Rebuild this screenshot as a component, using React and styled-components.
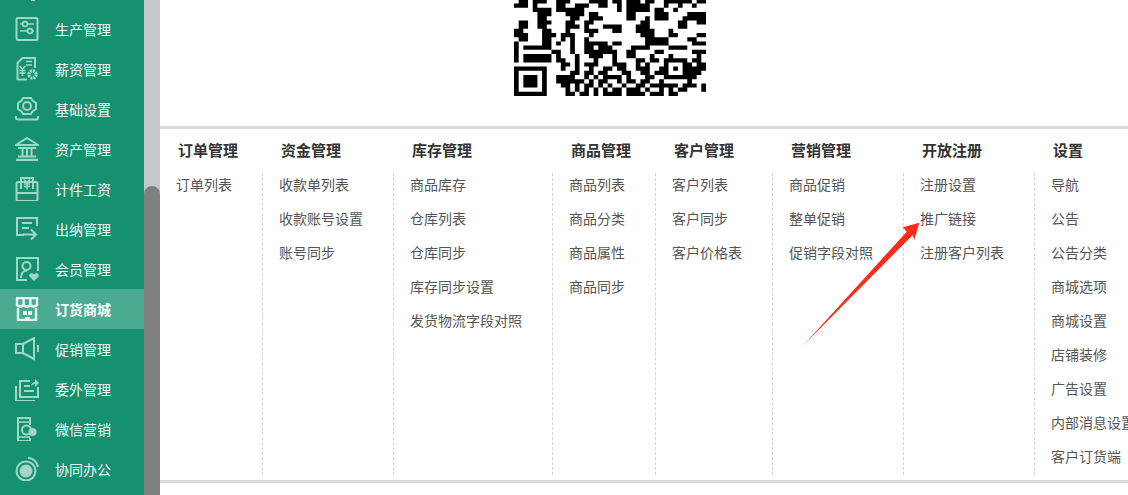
import React from "react";
import styled, { createGlobalStyle } from "styled-components";

const Global = createGlobalStyle`
  html, body { margin: 0; padding: 0; height: 495px; overflow: hidden; background: #fff; }
  body { font-family: "Noto Sans CJK SC", "Liberation Sans", sans-serif; }
  #root { height: 495px; overflow: hidden; }
`;

const Page = styled.div`
  display: flex;
  width: 1128px;
  height: 495px;
  overflow: hidden;
`;
const Sidebar = styled.nav`
  flex: 0 0 144px;
  background: #159170;
  overflow: hidden;
`;
const NavRow = styled.div`
  display: flex;
  align-items: center;
  gap: 16px;
  height: 40px;
  padding-left: 15px;
  font-size: 14px;
  line-height: 20px;
  color: ${(p) => (p.$active ? "#ffffff" : "#eef8f5")};
  font-weight: ${(p) => (p.$active ? 700 : 400)};
  background: ${(p) => (p.$active ? "#4aab90" : "transparent")};
  &:first-child { margin-top: -31px; }
`;
const NavIcon = styled.svg`
  flex: 0 0 24px;
  width: 24px;
  height: 24px;
  fill: none;
  stroke: ${(p) => (p.$active ? "#e6f4f0" : "#a3d6c7")};
  color: ${(p) => (p.$active ? "#e6f4f0" : "#a3d6c7")};
  stroke-width: ${(p) => (p.$active ? 2.4 : 2)};
`;
const Track = styled.div`
  flex: 0 0 16px;
  display: flex;
  flex-direction: column;
  background: #c6c8cd;
`;
const Thumb = styled.div`
  margin-top: 186px;
  flex: 1;
  background: #808080;
  border-radius: 8px 8px 0 0;
`;
const Main = styled.main`
  position: relative;
  flex: 1;
  min-width: 0;
  overflow: hidden;
  background: #fff;
`;
const TopArea = styled.section`
  height: 126px;
  padding-left: 354px;
  display: flex;
  flex-direction: column;
  align-items: flex-start;
`;
const Qr = styled.svg`
  display: block;
  flex: 0 0 96px;
  width: 192px;
  height: 96px;
`;
const Caption = styled.div`
  margin-top: 28px;
  width: 192px;
  height: 2px;
  overflow: hidden;
  text-align: center;
  white-space: nowrap;
  font-size: 13px;
  line-height: 15px;
  color: #333;
`;
const MenuPanel = styled.section`
  display: flex;
  height: 357px;
  box-sizing: border-box;
  border-top: 3px solid #d9d9d9;
  border-bottom: 3px solid #d9d9d9;
  padding-bottom: 5px;
  width: 1100px;
`;
const Column = styled.div`
  flex: 0 0 ${(p) => p.$w}px;
  display: flex;
  flex-direction: column;
  min-width: 0;
`;
const ColTitle = styled.h3`
  flex: 0 0 44px;
  margin: 0;
  padding-left: ${(p) => (p.$first ? 18 : 19)}px;
  font-size: 15px;
  line-height: 42px;
  font-weight: 700;
  color: #333;
  white-space: nowrap;
`;
const ColList = styled.ul`
  flex: 1;
  min-height: 0;
  margin: 0;
  padding: 0 0 0 16px;
  list-style: none;
  border-left: ${(p) => (p.$first ? "0" : "1px dashed #d4d4d4")};
`;
const ColItem = styled.li`
  height: 24px;
  margin-bottom: 10px;
  font-size: 14px;
  line-height: 22px;
  color: #555;
  white-space: nowrap;
`;
const Arrow = styled.svg`
  position: absolute;
  left: 640px;
  top: 220px;
  width: 122px;
  height: 130px;
  fill: #ff2a1a;
`;

const Yen = () => <path d="M0 0l3 3 3-3M3 3v7M0 4.5h6M0 7h6" strokeWidth="1.5" />;

const icons = {
  top: <path d="M16 23h4" />,
  prod: (
    <>
      <rect x="1.5" y="1" width="21" height="22" rx="1.5" />
      <path d="M5 7h14M5 14h14" strokeWidth="1.7" />
      <circle cx="10" cy="7" r="2.4" fill="#159170" strokeWidth="1.7" />
      <circle cx="15" cy="14" r="2.4" fill="#159170" strokeWidth="1.7" />
    </>
  ),
  pay: (
    <>
      <path d="M12 22.500H2.500V6l5-5h12.500v10" />
      <path d="M11 4.500h6M11 8h6" strokeWidth="1.500" />
      <g transform="translate(4.500 9)"><Yen /></g>
      <circle cx="17.500" cy="17.500" r="3.600" strokeWidth="3.200" strokeDasharray="2 .8" />
    </>
  ),
  base: (
    <>
      <path d="M8 1h8l1.500 2.500L21 6v6l-3.500 2.500L16 17H8l-1.500-2.500L3 12V6l3.500-2.500z" />
      <circle cx="12" cy="9" r="4" />
      <path d="M1 19v2q0 1.500 2 1.500h18q2 0 2-1.500v-2" />
    </>
  ),
  asset: (
    <>
      <path d="M1 8l11-7 11 7z" />
      <path d="M3 11h18M3 19.500h18" />
      <path d="M7.500 11v8M12 11v8M16.500 11v8" />
      <path d="M1 23h22" strokeWidth="2.500" />
    </>
  ),
  piece: (
    <>
      <rect x="1.500" y="5" width="21" height="19" rx="2" />
      <path d="M1.500 16h21" />
      <path d="M6 12V1h12v11" />
      <g transform="translate(9 2.500)"><Yen /></g>
    </>
  ),
  cash: (
    <>
      <path d="M22 9V1H2v17h7" />
      <path d="M7 6h10M7 11h7" />
      <path d="M8 17.500h13M16 12.500l5 5-5 5" />
    </>
  ),
  member: (
    <>
      <path d="M23 14V1H2v22h10" />
      <circle cx="11.500" cy="9" r="4" />
      <path d="M6 21q0-7 6-7.500" />
      <path d="M19 24l-4.500-4.500c-1.500-2.500 2.500-4.500 4.500-2 2-2.500 6-.5 4.500 2z" fill="currentColor" stroke="none" />
    </>
  ),
  store: (
    <>
      <path d="M2 1h20v7q-3.300 3-6.600 0-3.400 3-6.800 0-3.300 3-6.600 0z" />
      <path d="M8.600 1v7M15.400 1v7" />
      <path d="M3 11v12h18V11" />
      <path d="M9 15h2v2H9zM14 15h2v2h-2zM11 23v-2h3v2" strokeWidth="1.800" />
    </>
  ),
  promo: (
    <>
      <path d="M1 7h7l11-6v21L8 16H1z" />
      <path d="M8 7v9" />
      <path d="M23 8v7" />
    </>
  ),
  out: (
    <>
      <path d="M1 9v15h19" />
      <path d="M15 4H5v16h18V10" />
      <path d="M9 9h6M9 14h10" />
      <path d="M16 9q1-4 4-4V2l4 4-4 4V7q-2 0-4 2z" fill="currentColor" stroke="none" />
    </>
  ),
  wx: (
    <>
      <path d="M15 8V1H3v23h12v-3" />
      <path d="M3 5h12M3 20h12" strokeWidth="1.500" />
      <circle cx="11.500" cy="13" r="4.500" />
      <circle cx="17.500" cy="15" r="4" fill="currentColor" stroke="none" />
    </>
  ),
  coop: (
    <>
      <circle cx="11" cy="14" r="9.500" />
      <circle cx="11" cy="14" r="6.500" fill="currentColor" stroke="none" />
      <path d="M13 .8C18 1 22 5 23 10" />
    </>
  ),
};

const navItems = [
  ["top", ""],
  ["prod", "生产管理"],
  ["pay", "薪资管理"],
  ["base", "基础设置"],
  ["asset", "资产管理"],
  ["piece", "计件工资"],
  ["cash", "出纳管理"],
  ["member", "会员管理"],
  ["store", "订货商城", true],
  ["promo", "促销管理"],
  ["out", "委外管理"],
  ["wx", "微信营销"],
  ["coop", "协同办公"],
];

const columns = [
  { w: 102, title: "订单管理", items: ["订单列表"] },
  { w: 131, title: "资金管理", items: ["收款单列表", "收款账号设置", "账号同步"] },
  { w: 159, title: "库存管理", items: ["商品库存", "仓库列表", "仓库同步", "库存同步设置", "发货物流字段对照"] },
  { w: 103, title: "商品管理", items: ["商品列表", "商品分类", "商品属性", "商品同步"] },
  { w: 117, title: "客户管理", items: ["客户列表", "客户同步", "客户价格表"] },
  { w: 131, title: "营销管理", items: ["商品促销", "整单促销", "促销字段对照"] },
  { w: 131, title: "开放注册", items: ["注册设置", "推广链接", "注册客户列表"] },
  { w: 130, title: "设置", items: ["导航", "公告", "公告分类", "商城选项", "商城设置", "店铺装修", "广告设置", "内部消息设置", "客户订货端"] },
];

const qrRows = [
  "011011100111000011110" + "11011101100111111011",
  "111010000110011100110" + "01011111000100100100",
  "000011110111111000000" + "01011111011001000000",
  "000001110001111011000" + "00011000011100001111",
  "000001100000110011100" + "00011001011100011111",
  "011001110001100110000" + "00000011000000110011",
  "011001100001110100011" + "11000111000000110000",
  "110000110001000111000" + "11000111100010000000",
  "111000111011100010000" + "00000011100011000011",
  "011000110010100100000" + "00000001111100001100",
  "100000110100100111110" + "11000001111100000111",
  "101111110000100110111" + "00001111000011110000",
  "100000001100100111111" + "10011000011000000111",
  "101111110100010011100" + "10011000100010000010",
  "101111110110010001000" + "10000110110111110110",
  "000000000011010111000" + "11100101000100011011",
  "111111100010010010011" + "01100111001101011111",
  "100000100000110110110" + "00110011011100011110",
  "101110100111100101011" + "11010001100111111100",
  "101110100111111010110" + "01011011001000001000",
  "101110100011010110101" + "00100110111111011101",
  "100000100001010101010" + "11011101001010110001",
  "111111100001101101011" + "11011110111011000000",
];
const qrPath = qrRows
  .flatMap((row, r) =>
    [...row].map((c, x) => (c === "1" ? `M${x} ${r}h1v1h-1z` : ""))
  )
  .join("");

export default function App() {
  return (
    <>
      <Global />
      <Page>
        <Sidebar>
          {navItems.map(([icon, label, active]) => (
            <NavRow key={icon} $active={active}>
              <NavIcon viewBox="0 0 24 24" $active={active}>{icons[icon]}</NavIcon>
              {label && <span>{label}</span>}
            </NavRow>
          ))}
        </Sidebar>
        <Track><Thumb /></Track>
        <Main>
          <TopArea>
            <Qr viewBox="0 0.140 41 22.860" preserveAspectRatio="none">
              <path d={qrPath} fill="#000" />
            </Qr>
            <Caption>扫一扫，绑定微信号</Caption>
          </TopArea>
          <MenuPanel>
            {columns.map((col, i) => (
              <Column key={col.title} $w={col.w}>
                <ColTitle $first={i === 0}>{col.title}</ColTitle>
                <ColList $first={i === 0}>
                  {col.items.map((t) => (
                    <ColItem key={t}>{t}</ColItem>
                  ))}
                </ColList>
              </Column>
            ))}
          </MenuPanel>
          <Arrow viewBox="0 0 122 130">
            <polygon points="119.300,2.700 114.300,20 112.700,15 2.700,126 106.700,11.700 102.700,7.300" />
          </Arrow>
        </Main>
      </Page>
    </>
  );
}
